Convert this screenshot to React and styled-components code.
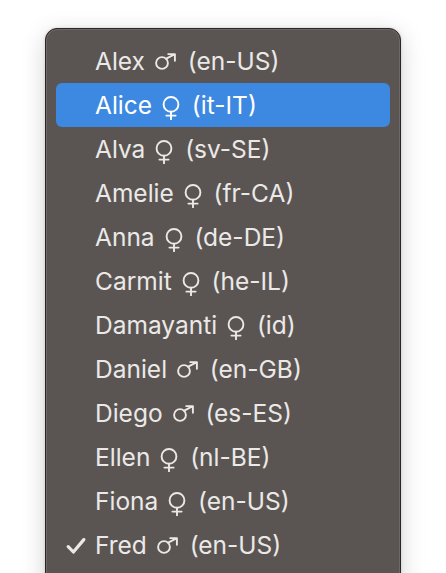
import React from "react";
import styled, { createGlobalStyle } from "styled-components";

const voices = [
  { name: "Alex", gender: "m", locale: "en-US" },
  { name: "Alice", gender: "f", locale: "it-IT" },
  { name: "Alva", gender: "f", locale: "sv-SE" },
  { name: "Amelie", gender: "f", locale: "fr-CA" },
  { name: "Anna", gender: "f", locale: "de-DE" },
  { name: "Carmit", gender: "f", locale: "he-IL" },
  { name: "Damayanti", gender: "f", locale: "id" },
  { name: "Daniel", gender: "m", locale: "en-GB" },
  { name: "Diego", gender: "m", locale: "es-ES" },
  { name: "Ellen", gender: "f", locale: "nl-BE" },
  { name: "Fiona", gender: "f", locale: "en-US" },
  { name: "Fred", gender: "m", locale: "en-US" },
];

const MaleIcon = () => (
  <MaleSvg viewBox="0 0 21 17" width="21" height="17" aria-label="♂">
    <circle cx="7" cy="10" r="5.9" />
    <path d="M11.3 5.7 L19.8 1.2 M13.2 1.1 H19.9 V7.8" />
  </MaleSvg>
);

const FemaleIcon = () => (
  <FemaleSvg viewBox="0 0 18 24" width="18" height="24" aria-label="♀">
    <circle cx="9" cy="8.4" r="7.4" />
    <path d="M9 15.8 V23.4 M4.4 19.6 H13.6" />
  </FemaleSvg>
);

const CheckIcon = () => (
  <CheckSvg viewBox="0 0 20 16" width="20" height="16">
    <path d="M2.2 8.6 L7.4 14 L17.8 1.6" />
  </CheckSvg>
);

const App = () => {
  const hovered = "Alice";
  const selected = "Fred";

  return (
    <>
      <GlobalStyle />
      <Page>
        <Menu>
          {voices.map((v) => (
            <Item key={v.name} active={v.name === hovered}>
              <Check>{v.name === selected && <CheckIcon />}</Check>
              <Label>
                {v.name} {v.gender === "m" ? <MaleIcon /> : <FemaleIcon />} (
                {v.locale})
              </Label>
            </Item>
          ))}
        </Menu>
      </Page>
    </>
  );
};

export default App;

const GlobalStyle = createGlobalStyle`
  html, body {
    margin: 0;
    padding: 0;
    background: #ffffff;
    overflow: hidden;
  }
`;

const Page = styled.div`
  width: 446px;
  height: 573px;
  overflow: hidden;
  padding: 28px 0 0 45px;
  box-sizing: border-box;
`;

const Menu = styled.div`
  width: 356px;
  min-height: 600px;
  box-sizing: border-box;
  padding: 10px 10px;
  background: #5a5552;
  border: 1px solid #2a2726;
  border-radius: 12px;
  box-shadow: inset 0 0 0 1px #6e6966, 0 6px 24px rgba(0, 0, 0, 0.18),
    0 0 3px rgba(0, 0, 0, 0.15);
  font-family: Inter, "Liberation Sans", "DejaVu Sans", sans-serif;
  color: #ebe9e7;
`;

const Item = styled.div`
  display: flex;
  align-items: center;
  height: 44px;
  border-radius: 6px;
  background: ${(p) => (p.active ? "#3d88e1" : "transparent")};
  color: ${(p) => (p.active ? "#ffffff" : "#ebe9e7")};
`;

const Check = styled.span`
  display: flex;
  align-items: center;
  width: 39px;
  height: 100%;
  box-sizing: border-box;
  padding-left: 10px;
`;

const CheckSvg = styled.svg`
  fill: none;
  stroke: currentColor;
  stroke-width: 3.2;
  stroke-linecap: round;
  stroke-linejoin: round;
  margin-top: 2px;
`;

const Label = styled.span`
  font-size: 24.5px;
  white-space: nowrap;
`;

const MaleSvg = styled.svg`
  fill: none;
  stroke: currentColor;
  stroke-width: 1.9;
  stroke-linecap: round;
  stroke-linejoin: round;
  vertical-align: 0;
  margin: 0 5px 0 3px;
`;

const FemaleSvg = styled.svg`
  fill: none;
  stroke: currentColor;
  stroke-width: 1.9;
  stroke-linecap: round;
  vertical-align: -6px;
  margin: 0 5px 0 3px;
`;
